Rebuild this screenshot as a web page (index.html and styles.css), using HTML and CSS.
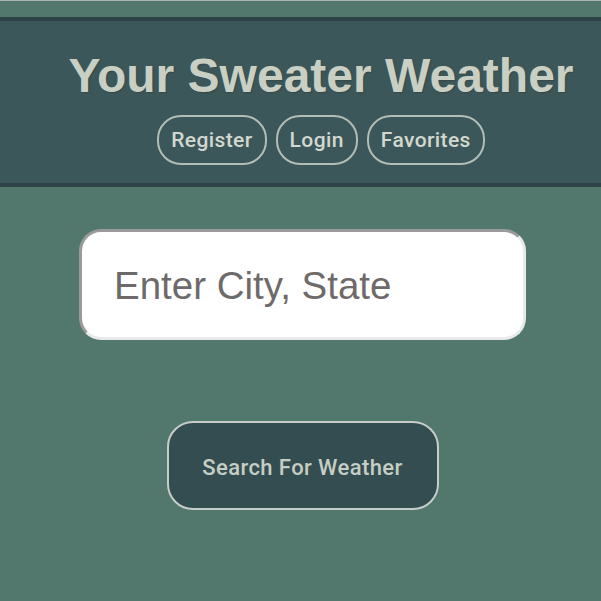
FILE: index.html
```html
<!DOCTYPE html>
<html>
<head>
<meta charset="utf-8">
<link rel="stylesheet" href="styles.css">
</head>
<body>
<div class="page">
  <header class="header">
    <h1 class="title">Your Sweater Weather</h1>
    <nav class="nav">
      <button class="nav-btn">Register</button>
      <button class="nav-btn">Login</button>
      <button class="nav-btn">Favorites</button>
    </nav>
  </header>
  <main class="main">
    <input class="city-input" type="text" placeholder="Enter City, State">
    <button class="search-btn">Search For Weather</button>
  </main>
</div>
</body>
</html>
```
FILE: styles.css
```css
html, body {
  margin: 0;
  padding: 0;
  background: #52786e;
  height: 100%;
}
body {
  border-top: 1px solid #a9b3b0;
  box-sizing: border-box;
  font-family: Roboto, "Liberation Sans", sans-serif;
}
.page {
  padding-top: 16px;
}
.header {
  background: #3c5759;
  border-top: 4px solid #2e4247;
  border-bottom: 4px solid #2e4247;
  padding: 31px 0 18px 41px;
  display: flex;
  flex-direction: column;
  align-items: center;
}
.title {
  margin: 0;
  font-family: "Liberation Sans", Arial, sans-serif;
  font-weight: bold;
  font-size: 48px;
  line-height: 47px;
  color: #c9cfc2;
  text-shadow: 1px 1px 1px rgba(40, 50, 50, 0.35);
  white-space: nowrap;
}
.nav {
  display: flex;
  gap: 9px;
  margin-top: 16px;
}
.nav-btn {
  font-family: Roboto, "Liberation Sans", sans-serif;
  font-size: 21px;
  font-weight: 500;
  letter-spacing: 0.4px;
  line-height: 24px;
  color: #d2d8cf;
  background: transparent;
  border: 2px solid #b4bcb6;
  border-radius: 24px;
  padding: 11px 12px;
}
.main {
  display: flex;
  flex-direction: column;
  align-items: center;
  padding-top: 42px;
  padding-left: 4px;
}
.city-input {
  box-sizing: border-box;
  width: 447px;
  height: 111px;
  border-width: 3px;
  border-style: solid;
  border-color: #9a9a9a #e8eaea #e8eaea #9a9a9a;
  border-radius: 22px;
  background: #fff;
  padding: 2px 32px 0;
  font-family: "Liberation Sans", Arial, sans-serif;
  font-size: 38.5px;
  color: #333;
  outline: none;
}
.city-input::placeholder {
  color: #6e6a6a;
}
.search-btn {
  margin-top: 81px;
  box-sizing: border-box;
  width: 272px;
  height: 89px;
  background: #344d50;
  border: 2px solid #c6ccc8;
  border-radius: 26px;
  font-family: Roboto, "Liberation Sans", sans-serif;
  font-size: 22px;
  font-weight: 500;
  letter-spacing: 0.4px;
  color: #c6cec4;
  padding: 3px 0 0;
}
```
